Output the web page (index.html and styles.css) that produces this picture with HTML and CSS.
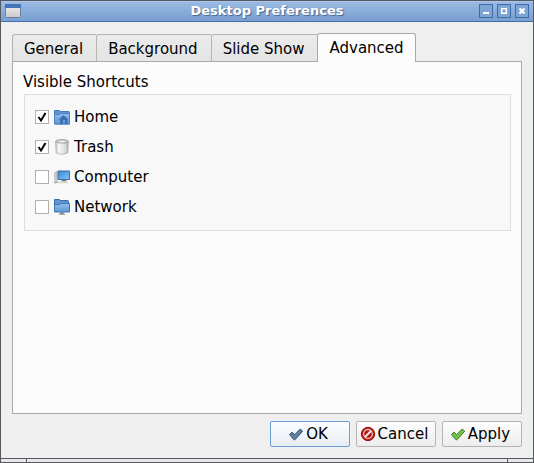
FILE: index.html
```
<!DOCTYPE html>
<html lang="en">
<head>
    <meta charset="UTF-8">
    <title>Desktop Preferences</title>
    <link rel="stylesheet" href="styles.css">
</head>
<body>
    <div class="window">
        <header class="titlebar">
            <svg class="window-icon" width="16" height="14" viewBox="0 0 16 14">
                <defs>
                    <linearGradient id="win" x1="0" y1="0" x2="0" y2="1">
                        <stop offset="0" stop-color="#f0f0ee"/>
                        <stop offset="1" stop-color="#c9c9c7"/>
                    </linearGradient>
                </defs>
                <rect x=".5" y=".5" width="15" height="13" rx="1" fill="url(#win)" stroke="#6d7f9b"/>
                <path d="M0 1q0-1 1-1h14q1 0 1 1v3H0z" fill="#4673b5"/>
            </svg>
            <h1 class="title">Desktop Preferences</h1>
            <div class="window-buttons">
                <button type="button" class="window-button" aria-label="Minimize">
                    <svg width="12" height="12" viewBox="0 0 12 12"><path d="M3 7h6v2H3z" fill="#fff"/></svg>
                </button>
                <button type="button" class="window-button" aria-label="Maximize">
                    <svg width="12" height="12" viewBox="0 0 12 12"><path d="M3.700 3.700h4.600v4.600H3.700z" fill="none" stroke="#fff" stroke-width="1.400"/></svg>
                </button>
                <button type="button" class="window-button" aria-label="Close">
                    <svg width="12" height="12" viewBox="0 0 12 12"><path d="M3.500 3.500l5 5M8.500 3.500l-5 5" stroke="#fff" stroke-width="2.200"/></svg>
                </button>
            </div>
        </header>

        <main class="content">
            <div class="tabs" role="tablist">
                <button type="button" class="tab" role="tab" aria-selected="false">General</button>
                <button type="button" class="tab" role="tab" aria-selected="false">Background</button>
                <button type="button" class="tab" role="tab" aria-selected="false">Slide Show</button>
                <button type="button" class="tab active" role="tab" aria-selected="true">Advanced</button>
            </div>

            <section class="panel" role="tabpanel">
                <h2 class="group-title" id="shortcuts">Visible Shortcuts</h2>
                <div class="group" role="group" aria-labelledby="shortcuts">
                    <label class="option">
                        <input type="checkbox" class="checkbox" checked>
                        <svg width="16" height="16" viewBox="0 0 16 16">
                            <defs>
                                <linearGradient id="folder" x1="0" y1="0" x2="0" y2="1">
                                    <stop offset="0" stop-color="#94bdea"/>
                                    <stop offset="1" stop-color="#5f98d8"/>
                                </linearGradient>
                            </defs>
                            <path d="M.5 15V1.500h5l1 1h8q1 0 1 1V15z" fill="#5f95d0" stroke="#4179b8"/>
                            <path d="M.5 5.500h5l1.500-1h8.500v10.500H.5z" fill="url(#folder)" stroke="#4c83c2"/>
                            <path d="M4.500 10.500L9.500 6l5 4.500h-1V15h-2.500v-4H9v4H6v-4.500z" fill="#3a70b2"/>
                        </svg>
                        <span>Home</span>
                    </label>
                    <label class="option">
                        <input type="checkbox" class="checkbox" checked>
                        <svg width="16" height="16" viewBox="0 0 16 16">
                            <defs>
                                <linearGradient id="bin">
                                    <stop offset="0" stop-color="#bcbcbc"/>
                                    <stop offset=".25" stop-color="#f6f6f6"/>
                                    <stop offset=".6" stop-color="#e4e4e4"/>
                                    <stop offset="1" stop-color="#adadad"/>
                                </linearGradient>
                            </defs>
                            <path d="M1.500 2.500L2.200 14q5.800 3 11.600 0l.7-11.500z" fill="url(#bin)" stroke="#b5b5b5" stroke-width=".8"/>
                            <ellipse cx="8" cy="2.300" rx="6.300" ry="1.800" fill="#c8c8c6" stroke="#999" stroke-width=".8"/>
                            <path d="M4 2.600q4-1.600 8 0-4 1.600-8 0z" fill="#f2f2f2"/>
                            <path d="M4.500 6v7M11.500 6v7" stroke="#fff" stroke-width=".8" opacity=".7"/>
                        </svg>
                        <span>Trash</span>
                    </label>
                    <label class="option">
                        <input type="checkbox" class="checkbox">
                        <svg width="16" height="16" viewBox="0 0 16 16">
                            <defs>
                                <linearGradient id="screen" x1="0" y1="0" x2="1" y2="1">
                                    <stop offset="0" stop-color="#3a8ad6"/>
                                    <stop offset="1" stop-color="#85c4f6"/>
                                </linearGradient>
                            </defs>
                            <path d="M.8 3.500L3 2.500v10.500L.8 14z" fill="#d8d8d8" stroke="#999" stroke-width=".7"/>
                            <path d="M4 2h11.500v8.500H4z" fill="url(#screen)" stroke="#3a6ea5"/>
                            <path d="M8 11h4l.8 1.500H7.200z" fill="#777"/>
                            <path d="M4 12.500h9l1.500 1.700H3.500z" fill="#dcd6d1"/>
                            <path d="M1 14l2.500-.8" stroke="#999"/>
                        </svg>
                        <span>Computer</span>
                    </label>
                    <label class="option">
                        <input type="checkbox" class="checkbox">
                        <svg width="16" height="16" viewBox="0 0 16 16">
                            <path d="M.5 12.500V.5h5l1 1h7q1 0 1 1v3h1v7z" fill="#5f95d0" stroke="#346ba9"/>
                            <path d="M.5 5.500h5l1.500-1h8.500v8.500H.5z" fill="url(#folder)" stroke="#3f76b4"/>
                            <path d="M6.500 13.500h3V15h-3z" fill="#666"/>
                            <path d="M5 15.200h6" stroke="#8f8a83"/>
                        </svg>
                        <span>Network</span>
                    </label>
                </div>
            </section>

            <div class="actions">
                <button type="button" class="button default">
                    <svg width="16" height="16" viewBox="0 0 16 16"><path d="M1.500 8.500L4 6.200l2.700 2.500L12.200 3l2.500 2.200-7.500 8.300q-.8.600-1.500 0z" fill="#62809f" stroke="#37506c"/></svg>
                    OK
                </button>
                <button type="button" class="button">
                    <svg width="16" height="16" viewBox="0 0 16 16">
                        <circle cx="8" cy="8" r="6.700" fill="#c41e1b" stroke="#8d1412"/>
                        <circle cx="8" cy="8" r="4.300" fill="#a81412" stroke="#ecc9c8" stroke-width="1.200"/>
                        <path d="M5 11l6-6" stroke="#f3e6e6" stroke-width="2"/>
                    </svg>
                    Cancel
                </button>
                <button type="button" class="button">
                    <svg width="16" height="16" viewBox="0 0 16 16"><path d="M1.500 8.500L4 6.200l2.700 2.500L12.200 3l2.500 2.200-7.500 8.300q-.8.600-1.500 0z" fill="#72c24a" stroke="#397a22"/></svg>
                    Apply
                </button>
            </div>
        </main>

        <footer class="resize-bar">
            <span class="grip"></span>
            <span class="grip"></span>
        </footer>
    </div>
</body>
</html>
```
FILE: styles.css
```
:root {
    --frame: #565a60;
    --line: #a9a9a9;
    --surface: #efefef;
    --panel: #fcfcfc;
}

* {
    margin: 0;
    padding: 0;
    box-sizing: border-box;
}

body {
    font-family: "DejaVu Sans", sans-serif;
    font-size: 15px;
    line-height: 18px;
    color: #000;
    background-color: var(--surface);
}

button {
    font: inherit;
    color: inherit;
}

.window {
    display: flex;
    flex-direction: column;
    min-height: 100vh;
    border: 1px solid var(--frame);
}

.titlebar {
    display: grid;
    grid-template-columns: 52px 1fr 52px;
    align-items: center;
    height: 21px;
    padding: 0 4px;
    border-bottom: 1px solid #436fab;
    background: linear-gradient(#9bbce4, #789fd1);
    box-shadow: inset 0 1px #aac6ea;
}

.title {
    font-size: 13px;
    line-height: 16px;
    font-weight: bold;
    text-align: center;
    color: #fff;
    text-shadow: 1px 1px 1px #45648f;
    padding-bottom: 1px;
}

.window-buttons {
    display: flex;
    justify-content: flex-end;
    gap: 4px;
}

.window-button {
    display: flex;
    width: 14px;
    height: 14px;
    border: 1px solid #3e6aa8;
    background-color: #7fa5d7;
}

.content {
    flex: 1;
    display: flex;
    flex-direction: column;
    padding: 11px;
}

.tabs {
    display: flex;
    align-items: flex-end;
}

.tab {
    height: 27px;
    padding: 1px 13px 0 11px;
    border: 1px solid #b4b4b4;
    border-right: 0;
    border-bottom: 0;
    border-radius: 3px 0 0 0;
    background: linear-gradient(#ebebeb, #e4e4e4);
}

.tab.active {
    height: 29px;
    margin-bottom: -1px;
    padding: 0 11px 1px;
    border: 1px solid var(--line);
    border-bottom: 0;
    border-radius: 3px 3px 0 0;
    background: var(--panel);
    z-index: 1;
}

.panel {
    flex: 1;
    padding: 11px 10px;
    border: 1px solid var(--line);
    background-color: var(--panel);
}

.group-title {
    font-size: 15px;
    font-weight: normal;
}

.group {
    display: flex;
    flex-direction: column;
    gap: 12px;
    margin: 3px 0 0 1px;
    padding: 13px 10px 14px;
    border: 1px solid #dedede;
    background-color: #f8f8f8;
}

.option {
    display: flex;
    align-items: center;
    align-self: flex-start;
    gap: 4px;
}

.checkbox {
    appearance: none;
    width: 14px;
    height: 14px;
    margin-right: 1px;
    border: 1px solid #b0b0b0;
    background-color: #fff;
}

.checkbox:checked {
    background-image: url("data:image/svg+xml,%3Csvg xmlns='http://www.w3.org/2000/svg' viewBox='0 0 12 12'%3E%3Cpath d='M2.500 6l2.500 3.500L9.500 2' fill='none' stroke='%23000' stroke-width='2'/%3E%3C/svg%3E");
}

.actions {
    display: flex;
    justify-content: flex-end;
    gap: 6px;
    padding-top: 7px;
}

.button {
    display: flex;
    align-items: center;
    justify-content: center;
    gap: 2px;
    width: 80px;
    height: 26px;
    padding-right: 4px;
    border: 1px solid #b4b4b4;
    border-radius: 2px;
    background: linear-gradient(#fdfdfd, #ededed);
}

.button.default {
    border-color: #6d9fd6;
    background: linear-gradient(#fcfdfe, #e6edf4);
}

.resize-bar {
    display: flex;
    justify-content: space-between;
    height: 4px;
    padding: 0 25px;
    border-top: 1px solid var(--frame);
    background-color: #e8e8e8;
}

.grip {
    width: 1px;
    background-color: var(--frame);
}
```
